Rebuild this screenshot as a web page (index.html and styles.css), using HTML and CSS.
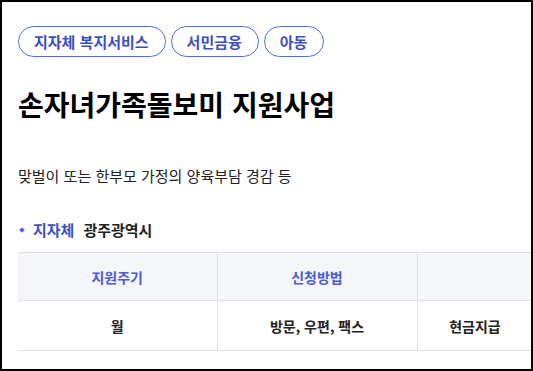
FILE: index.html
```html
<!DOCTYPE html>
<html lang="ko">
  <head>
    <meta charset="UTF-8" />
    <meta name="viewport" content="width=device-width, initial-scale=1.0" />
    <title>손자녀가족돌보미 지원사업</title>
    <link rel="stylesheet" href="styles.css">
  </head>
  <body>
    <div class="frame">
      <div class="tags">
        <span class="tag">지자체 복지서비스</span>
        <span class="tag">서민금융</span>
        <span class="tag">아동</span>
      </div>

      <h1 class="title">손자녀가족돌보미 지원사업</h1>

      <p class="summary">맞벌이 또는 한부모 가정의 양육부담 경감 등</p>

      <div class="agency">
        <span class="agency-label">지자체</span>
        <span class="agency-name">광주광역시</span>
      </div>

      <table class="info">
        <colgroup>
          <col class="col-a" />
          <col class="col-b" />
          <col class="col-c" />
        </colgroup>
        <thead>
          <tr>
            <th>지원주기</th>
            <th>신청방법</th>
            <th></th>
          </tr>
        </thead>
        <tbody>
          <tr>
            <td>월</td>
            <td>방문, 우편, 팩스</td>
            <td>현금지급</td>
          </tr>
        </tbody>
      </table>
    </div>
  </body>
</html>
```

FILE: styles.css
```css
body {
  margin: 0;
  font-family: "Noto Sans CJK KR", "Noto Sans", sans-serif;
  background: #fff;
  color: #111;
}
.frame {
  box-sizing: border-box;
  width: 533px;
  height: 371px;
  border: 2px solid #000;
  padding: 24px 0 0 16px;
  overflow: hidden;
}
.tags {
  display: flex;
  gap: 5px;
}
.tag {
  box-sizing: border-box;
  height: 31px;
  padding: 0 16px 0 15px;
  border: 1px solid #4a6fe3;
  border-radius: 16px;
  color: #3b4ec4;
  font-size: 15px;
  font-weight: 700;
  line-height: 29px;
}
.title {
  margin: 28px 0 0;
  font-size: 28px;
  font-weight: 700;
  line-height: 38px;
  color: #000;
}
.summary {
  margin: 42px 0 0;
  font-size: 15px;
  line-height: 22px;
  color: #222;
}
.agency {
  display: flex;
  align-items: center;
  margin-top: 33px;
  font-size: 15px;
  font-weight: 700;
  line-height: 20px;
}
.agency-label {
  position: relative;
  padding-left: 15px;
  color: #3b4ec4;
}
.agency-label::before {
  content: "";
  position: absolute;
  left: 2px;
  top: 8px;
  width: 4px;
  height: 4px;
  background: #4a63d8;
  transform: rotate(45deg);
}
.agency-name {
  margin-left: 9px;
  color: #222;
}
.info {
  margin-top: 12px;
  border-collapse: collapse;
  table-layout: fixed;
  width: 515px;
}
.col-a {
  width: 199px;
}
.col-b {
  width: 200px;
}
.col-c {
  width: 116px;
}
.info th,
.info td {
  border: 1px solid #dedfe3;
  text-align: center;
  font-size: 14px;
  padding: 0;
}
.info th:first-child,
.info td:first-child {
  border-left: none;
}
.info th {
  height: 47px;
  background: #f5f6fa;
  color: #4a5bd6;
  font-weight: 700;
}
.info td {
  height: 49px;
  color: #222;
  font-weight: 700;
}
```
